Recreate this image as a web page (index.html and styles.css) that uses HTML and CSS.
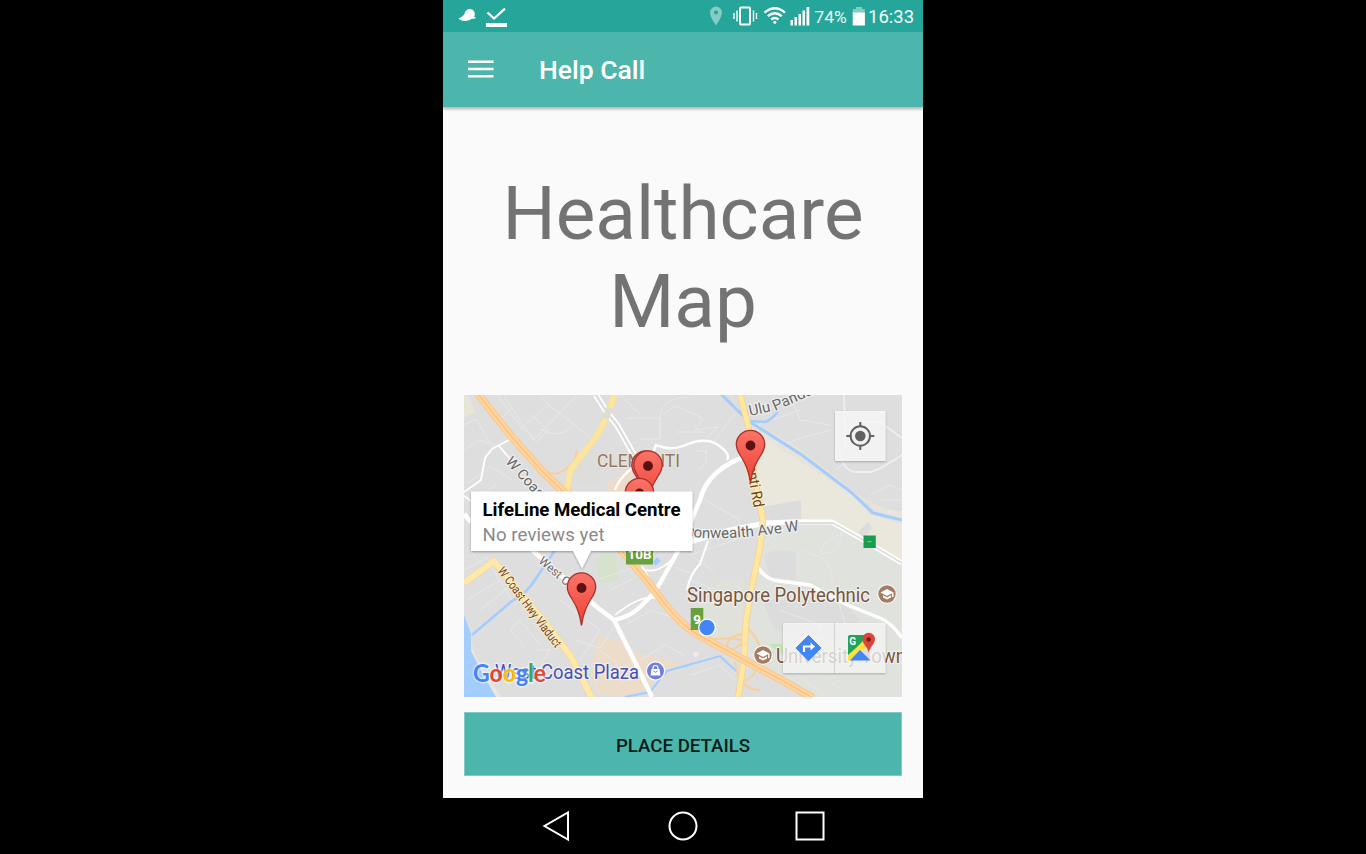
FILE: index.html
```html
<!DOCTYPE html>
<html lang="en">
<head>
<meta charset="utf-8">
<title>Help Call</title>
<link rel="stylesheet" href="styles.css">
</head>
<body>
<div class="phone">
  <div class="status">
    <svg class="status-left" width="70" height="32" viewBox="443 0 70 32">
      <path d="M458.500 18.500c1.800-.6 4.300-2 5.800-4.200 .7-3.300 2.700-5.300 5.500-5.300 3.200 0 5.400 2.800 5 5.800-.1 1-.5 1.700-.9 2.200l2 .2c-.6 1.200-2.300 1.700-4.300 1.500-3 2.300-7.500 2.800-10.500 1.500-1.200-.5-2.300-.8-2.600-1.700z" fill="#fff"/>
      <path d="M487.500 12.500l6.500 6L505 8.700" fill="none" stroke="#fff" stroke-width="2.300"/>
      <path d="M486 23h21v4h-21z" fill="#fff"/>
    </svg>
    <svg class="status-right" width="105" height="32" viewBox="706 0 105 32">
      <path fill-rule="evenodd" d="M716 6.500a6 6 0 0 0-6 6c0 4.500 6 13 6 13s6-8.500 6-13a6 6 0 0 0-6-6zm0 4a2 2 0 1 1 0 4 2 2 0 0 1 0-4z" fill="#85ccc4"/>
      <rect x="740" y="7.500" width="10" height="17" rx="1" fill="none" stroke="#fff" stroke-width="2"/>
      <path d="M734 13v6M737 10.500v11M753.500 10.500v11M756.500 13v6" stroke="#fff" stroke-width="1.400"/>
      <g fill="none" stroke="#fff" stroke-width="2.300"><path d="M764.500 12.700q10.300-9 20.600 0M767.800 16.200q7-6 14 0M771.200 19.500q3.600-3 7.200 0"/></g>
      <circle cx="774.800" cy="22.300" r="1.500" fill="#fff"/>
      <path d="M790.500 20h2.500v5.500h-2.500zM794.500 17h2.500v8.500h-2.500zM798.500 14h2.500v11.500h-2.500zM802.500 10.500h2.500v15h-2.500zM806.500 7h2.800v18.500h-2.800z" fill="#fff"/>
    </svg>
    <span class="percent">74%</span>
    <svg class="battery" width="14" height="32" viewBox="852 0 14 32">
      <path d="M856 7h6v2h2.800v4h-12V9h3.200z" fill="#85ccc4"/><path d="M852.700 12.500h12.200v13h-12.200z" fill="#fff"/>
    </svg>
    <span class="clock">16:33</span>
  </div>
  <header class="appbar">
    <svg width="26" height="18" viewBox="0 0 26 18"><path d="M0 1.800h25.500M0 9h25.500M0 16.200h25.500" stroke="#fff" stroke-width="2.400"/></svg>
    <span class="appbar-title">Help Call</span>
  </header>
  <main class="content">
    <h1 class="heading">Healthcare Map</h1>
    <svg class="map" viewBox="464 395 437.500 301.500" preserveAspectRatio="none">
      <defs>
        <linearGradient id="red" x1="0" y1="0" x2="0" y2="1"><stop offset="0" stop-color="#fb7468"/><stop offset="1" stop-color="#ee4035"/></linearGradient>
        <filter id="shadow" x="-10%" y="-15%" width="120%" height="140%"><feDropShadow dx="0" dy="1" stdDeviation="1.200" flood-opacity=".35"/></filter>
        <g id="pin">
          <path d="M0 0C-2-14-5.500-20-9.500-26.500C-12.500-31-14.200-34-14.200-38.500A14.200 14.200 0 0 1 14.200-38.500C14.200-34 12.500-31 9.500-26.500C5.500-20 2-14 0 0z" fill="url(#red)" stroke="#a8322a" stroke-width="1.300"/>
          <circle cy="-37.500" r="4.900" fill="#5b1212"/>
        </g>
        <g id="school">
          <circle r="9.700" fill="#fff"/><circle r="8.700" fill="#a57c63"/>
          <path d="M0-5L-6.500-1.500 0 2l5-2.700V3h1.500v-4.500z" fill="#fff"/><path d="M-4 1.300V3.500L0 5.500l4-2V1.300L0 3.500z" fill="#fff"/>
        </g>
      </defs>
      <rect x="464" y="395" width="439" height="302" fill="#dedede"/>

      <!-- land areas -->
      <path d="M748 424L755 500L765 523L830 520L860 535L902 562V524L870 514L850 490L795 453z" fill="#eae8dd"/>
      <path d="M750 420L800 449L865 500L902 514V525L750 430z" fill="#e6e4da"/>
      <path d="M765 525L830 521L902 562V697H820L745 655z" fill="#e0e2dd"/>
      <path d="M762 507L801 500V519L766 522zM764 555Q775 547 796 553V580L770 577zM868 522L872 528 864 538 858 532zM762 600H840L860 620 840 640 775 630z" fill="#dcdcdc"/>
      <path d="M464 395h5l6 18-11 4z" fill="#e6e5d6"/>
      <path d="M578 455L600 452V483H573z" fill="#dddeda"/>
      <path d="M608 482L632 467L632 495H608z" fill="#eddcc9"/>
      <path d="M597 560Q604 549 616 554L618 580 602 584Q595 575 597 560z" fill="#d6e2cc"/>
      <path d="M696 603L722 578L745 582L742 634L709 641z" fill="#dfe1da"/>
      <path d="M598 635L625 642L633 652L682 663L655 679L640 696H600L590 680z" fill="#ecddcb"/>
      <path d="M769 644l13 0 3 12-10-7z" fill="#c4e3b4"/>
      <path d="M464 615L471 634L472 650L484 674L497 697H464z" fill="#a3ccff"/>
      <path d="M471 634L473 650L485 674L501 697H496L484 676L471 651z" fill="#eae8dc"/>

      <!-- minor streets -->
      <g fill="none" stroke="#e8e8e8" stroke-width="1">
        <path d="M504 397L512 408L495 424M512 408L533 440L577 395M520 429L549 405L539 393M523 424L536 442L548 430L530 414M548 405L574 424Q562 440 540 429M573 424L590 438M464 425L476 419L494 450M464 450L479 440L498 446M467 484L490 466L512 480M476 499L497 484M497 395L526 433"/>
        <path d="M620 395L640 414M628 418H660V439H640M660 439L660 415Q662 398 690 397M663 415L675 406L703 418 695 430 718 427 707 438M676 432H705M697 451H706V463L699 470M735 413L715 440M790 395L800 420L830 425M755 426L800 410M765 440Q785 446 795 440L830 430"/>
        <path d="M464 570L487 558L499 580M467 600L500 580L515 605M470 550L482 565M480 610L508 588M510 630L520 620 540 645M510 630L525 647M535 650L550 650 532 680M545 680L560 665M560 600L600 630 580 660M575 640L600 648 615 625M600 579L640 565M610 590L650 570M625 625L652 610 680 620M640 660L665 645 685 656M600 650L617 663 611 680"/>
        <path d="M690 555L715 572M675 567L690 573M690 675L720 665 735 680M690 580L740 600M705 500L740 520 735 540 690 555M703 540L748 525M760 545L790 525M802 548q8 8 18 8 10 8 12 20v20M820 554L824 544 842 532 840 542 832 552 820 554M780 610L820 625 815 650M835 590L850 640M790 670L825 695M805 660L840 690M880 500H902M870 505L878 512H902M835 470L850 460M870 495L890 485 902 490"/>
      </g>

      <!-- rivers -->
      <g fill="none" stroke="#a3ccff" stroke-width="3">
        <path d="M721 394L735 408L750 422L802 455L852 493L873 513L902 520"/>
        <path d="M750 421L765 422Q772 420 778 411" stroke-width="2.500"/>
        <path d="M472 635L512 601Q527 593 535 580L557 547" stroke-width="2.500"/>
        <path d="M625 697L650 692L661 678L667 671L720 656L736 671" stroke-width="2"/>
        <path d="M654 564l5-5" stroke-width="5"/>
      </g>

      <!-- white roads -->
      <g fill="none" stroke="#fff" stroke-width="3">
        <path d="M464 492L481 480L485 458L492 449L509 440" stroke-width="1.800"/>
        <path d="M499 446L510 459M464 496l20 14" stroke-width="1.800"/>
        <path d="M596 395L608 414L617 425L634 455" stroke-width="6"/>
        <path d="M596 395L608 414L617 425L634 455" stroke="#dcdcdc" stroke-width="2.500"/>
        <path d="M652 455L656 445Q670 451 683 446Q705 436 718 445T727 460" stroke-width="2.300"/>
        <path d="M615 490Q620 475 640 463" stroke-width="2.300"/>
        <path d="M750 455Q708 468 700 500L677 553L655 592L640 607Q630 617 614 620" stroke-width="4.500"/>
        <path d="M464 514L471 522M532 550L598 608L614 620L633 658L652 697" stroke-width="4.500"/>
        <path d="M690 542L730 530L766 523L790 522H832L860 538L902 563" stroke-width="5"/>
        <path d="M791 523H833L860 538L902 563" stroke="#dedede" stroke-width="1.800"/>
        <path d="M758 567Q765 580 780 581L810 585L845 604L880 618Q892 623 902 638" stroke-width="3.500"/>
        <path d="M687 590Q690 574 700 564L708 541" stroke-width="2"/>
        <path d="M636 565Q655 580 676 555M655 592Q648 575 642 566M615 615Q640 595 655 598T675 614" stroke-width="1.600"/>
        <path d="M844 395L846 445L839 453Q845 474 859 472H870Q876 472 902 455M857 422H880L902 438" stroke="#efefef" stroke-width="1.800"/>
      </g>

      <!-- trunk roads and motorways -->
      <g fill="none" stroke-linejoin="round">
        <path d="M545 470Q556 480 573 463M568 487L577 450M571 498Q568 480 573 463M705 640Q750 635 740 645Q723 657 728 642Q733 633 748 634M735 662Q739 690 760 690M745 625Q765 645 760 660Q752 683 742 680" stroke="#f8cf9b" stroke-width="2"/>
        <path d="M615 394L607 415Q601 433 585 451L571 469L566 492" stroke="#f1e2ac" stroke-width="6.500"/>
        <path d="M615 394L607 415Q601 433 585 451L571 469L566 492" stroke="#ffe59b" stroke-width="4.500"/>
        <path d="M610 408L605 419" stroke="#deddd3" stroke-width="6"/>
        <path d="M740 394L748 425L755 480L763 520L760 547L752 587L746 620L744 660L738 698" stroke="#f1d58b" stroke-width="6.500"/>
        <path d="M740 394L748 425L755 480L763 520L760 547L752 587L746 620L744 660L738 698" stroke="#ffe7a2" stroke-width="5"/>
        <path d="M464 583L494 561L515 587L543 620L570 655L592 698" stroke="#f3da94" stroke-width="7"/>
        <path d="M464 583L494 561L515 587L543 620L570 655L592 698" stroke="#ffe8ac" stroke-width="5.500"/>
        <path d="M478 394L511 436L543 472L568 496L622 551L648 582L664 603Q685 629 702 637L746 661L785 682L813 698" stroke="#f8c98e" stroke-width="8"/>
        <path d="M478 394L511 436L543 472L568 496L622 551L648 582L664 603Q685 629 702 637L746 661L785 682L813 698" stroke="#ffd39b" stroke-width="6"/>
        <path d="M478 394L511 436L543 472L568 496L622 551L648 582L664 603Q685 629 702 637L746 661L785 682L813 698" stroke="#f1ba78" stroke-width="1"/>
      </g>

      <!-- road and district labels -->
      <g class="label">
        <text class="area" x="597" y="467" textLength="83" lengthAdjust="spacingAndGlyphs">CLEMENTI</text>
        <path id="ulu" d="M750 416L777 410L830 387" fill="none"/>
        <text class="road" font-size="15"><textPath href="#ulu">Ulu Pandan</textPath></text>
        <text class="road" font-size="14.500" transform="translate(505 462) rotate(48)">W Coast Rd</text>
        <text class="road" font-size="12" transform="translate(538 562) rotate(41)" textLength="60" lengthAdjust="spacingAndGlyphs">West Coast</text>
        <path id="commonwealth" d="M651 523L693 537Q730 542 815 528" fill="none"/>
        <text class="road" font-size="15"><textPath href="#commonwealth">Commonwealth Ave W</textPath></text>
        <text class="highway" font-size="15" transform="translate(741 435) rotate(80)" textLength="74" lengthAdjust="spacingAndGlyphs">Clementi Rd</text>
        <text class="highway" font-size="12.500" transform="translate(497 571) rotate(53)" textLength="97" lengthAdjust="spacingAndGlyphs">W Coast Hwy Viaduct</text>
        <text class="place" x="687" y="601.500" textLength="183" lengthAdjust="spacingAndGlyphs">Singapore Polytechnic</text>
        <text class="place" x="776" y="662.500" textLength="130" lengthAdjust="spacingAndGlyphs">University Town</text>
        <text class="shop" x="495" y="679" textLength="144" lengthAdjust="spacingAndGlyphs">West Coast Plaza</text>
      </g>
      <use href="#school" x="887" y="594"/>
      <use href="#school" x="763" y="655"/>
      <circle cx="655.500" cy="671" r="9.700" fill="#fff"/><circle cx="655.500" cy="671" r="8.500" fill="#717de0"/>
      <path d="M651.500 669h8l1 6.500h-10z" fill="#fff"/><path d="M653 670v-2a2.500 2.500 0 0 1 5 0v2" fill="none" stroke="#fff" stroke-width="1.200"/><path d="M653.500 671q2 2.500 4 0" fill="none" stroke="#717de0"/>
      <circle cx="696" cy="654.500" r="1.700" fill="#ddd" stroke="#fff"/>
      <path d="M863.500 535.500h12.300V548h-12.300z" fill="#179c50"/><path d="M867.500 541.700h4" stroke="#8ec89f"/>
      <path d="M626 540h27v24.500h-27z" fill="#68a13e"/><text class="exit" x="639.500" y="558.500">10B</text>
      <path d="M690.700 608h12.600v22h-12.600z" fill="#68a13e"/><text class="exit" x="697" y="624">9</text>
      <circle cx="707" cy="627.500" r="9" fill="#fff"/><circle cx="707" cy="627.500" r="7.700" fill="#4285f4"/>

      <!-- place markers -->
      <use href="#pin" x="646" y="503.500"/><use href="#pin" x="648" y="503.500"/>
      <use href="#pin" x="639.500" y="531"/><use href="#pin" x="750.500" y="483"/>
      <use href="#pin" x="581.500" y="625.500"/>

      <!-- info window -->
      <path d="M471 491.500H692.500V551H591L582 568.500L573 551H471z" fill="#fff" filter="url(#shadow)"/>
      <text class="info-title" x="482.500" y="516" textLength="198">LifeLine Medical Centre</text>
      <text class="info-sub" x="482.500" y="541" textLength="122">No reviews yet</text>

      <!-- map controls -->
      <g filter="url(#shadow)"><rect x="835" y="411" width="50.500" height="50" rx="1" fill="#fff" fill-opacity=".76"/></g>
      <g fill="none" stroke="#616161"><circle cx="860.300" cy="436" r="9.700" stroke-width="2"/><path d="M860.300 422v5M860.300 445v5M846.300 436h5M869.300 436h5" stroke-width="2"/></g>
      <circle cx="860.300" cy="436" r="5.300" fill="#616161"/>
      <g filter="url(#shadow)"><rect x="783" y="623" width="102.500" height="50" rx="1" fill="#fff" fill-opacity=".7"/></g>
      <path d="M834.500 623v50" stroke="#d2d2d2"/>
      <path d="M808.500 635.500L821 648 808.500 660.800 796 648z" fill="#4285f4" stroke="#4285f4" stroke-linejoin="round"/>
      <path d="M804 652v-5.500h7" fill="none" stroke="#fff" stroke-width="2.200"/><path d="M810.500 642.500l4.500 4-4.500 4z" fill="#fff"/>
      <path d="M850 635h20v25h-22v-23z" fill="#dedede"/>
      <path d="M850 635h18L848 658v-21q0-2 2-2z" fill="#20a35a"/>
      <path d="M848 655L865 640 870 644 851 660.500h-3z" fill="#ffe13d"/>
      <path d="M850 660.500L860 650 870.500 660.500z" fill="#4285f4"/>
      <path d="M868.700 653c-1-7-6.200-8-6.200-14a6.200 6.200 0 0 1 12.400 0c0 6-5.200 7-6.200 14z" fill="#dc453a"/><circle cx="868.700" cy="639.500" r="2.300" fill="#7b1e1b"/>
      <text class="g-mark" x="849.300" y="644.500">G</text>
      <text class="google" x="473" y="682" textLength="73" lengthAdjust="spacingAndGlyphs"><tspan fill="#4285f4">G</tspan><tspan fill="#ea4335">o</tspan><tspan fill="#fbbc05">o</tspan><tspan fill="#4285f4">g</tspan><tspan fill="#34a853">l</tspan><tspan fill="#ea4335">e</tspan></text>
    </svg>
    <button class="details">PLACE DETAILS</button>
  </main>
  <nav class="navbar">
    <svg width="480" height="56" viewBox="443 798 480 56" fill="none" stroke="#fff" stroke-width="2">
      <path d="M568 812.500V839.500L544.500 826z"/><circle cx="683" cy="826" r="13.500"/><rect x="796.500" y="812.500" width="27" height="27"/>
    </svg>
  </nav>
</div>
</body>
</html>
```
FILE: styles.css
```css
* { box-sizing: border-box; }
body { margin: 0; background: #000; font-family: Roboto, sans-serif; display: flex; justify-content: center; }
svg { display: block; flex: none; }
.phone { width: 480px; height: 854px; display: flex; flex-direction: column; background: #fafafa; }
.status { height: 32px; flex: none; display: flex; align-items: center; background: #26a69a; color: #fff; }
.status-left { margin-right: 193px; }
.percent { width: 41px; padding: 1px 0 0 3.5px; font-size: 17.4px; line-height: 34px; color: #e9f6f5; white-space: nowrap; }
.clock { padding: 2px 0 0 2px; font-size: 18.500px; line-height: 34px; white-space: nowrap; color: #f2faf9; }
.appbar { height: 75px; flex: none; display: flex; align-items: center; padding: 0 24.500px 1px; background: #4db6ac; box-shadow: 0 2px 3px rgba(0, 0, 0, .3); clip-path: inset(0 0 -6px 0); }
.appbar-title { margin: 1px 0 0 45.500px; color: #fff; font-size: 26.500px; font-weight: 500; }
.content { height: 691px; flex: none; display: flex; flex-direction: column; padding: 62.500px 21.300px 0 21.300px; }
.heading { margin: 0 0 50px; padding: 0 32px; height: 175.500px; font-size: 74.67px; line-height: 88px; font-weight: 400; text-align: center; color: #737373; }
.map { width: 437.500px; height: 301.500px; }
.details { height: 64px; margin-top: 15.500px; border: 1px solid #80cbc4; background: #4db6ac; color: #0b1c1a; font: 500 18.67px Roboto, sans-serif; padding: 4px 0 0; }
.navbar { height: 56px; background: #000; }
.label text { paint-order: stroke; stroke: #f4f4f4; stroke-width: 2.500px; stroke-opacity: .8; stroke-linejoin: round; }
.label .area { font-size: 18px; fill: #95785a; stroke-width: 1.500px; stroke-opacity: .5; }
.label .road { fill: #686868; }
.label .highway { fill: #6b4526; stroke: #fff0c8; }
.label .place { font-size: 19.500px; fill: #775640; }
.label .shop { font-size: 19.500px; fill: #4650b5; }
.exit { font-size: 13.500px; font-weight: 700; fill: #fff; text-anchor: middle; }
.info-title { font-size: 18.670px; font-weight: 700; fill: #000; }
.info-sub { font-size: 18.670px; fill: #8a8a8a; }
.g-mark { font-size: 10px; font-weight: 700; fill: #fff; }
.google { font-family: Lato, sans-serif; font-size: 25px; font-weight: 700; paint-order: stroke; stroke: #fff; stroke-width: 3px; stroke-opacity: .5; stroke-linejoin: round; }
```
